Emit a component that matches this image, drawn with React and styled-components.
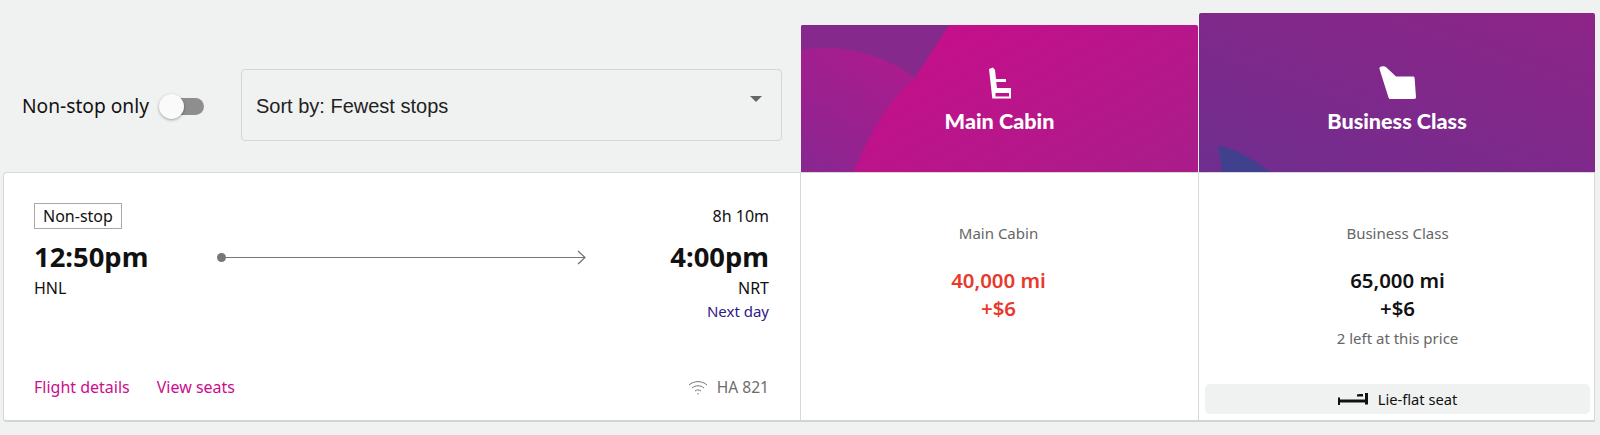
import styled, { createGlobalStyle } from "styled-components";

const GlobalStyle = createGlobalStyle`
  html, body {
    margin: 0;
    background: #f0f2f1;
  }
  body {
    font-family: "Noto Sans", "Open Sans", sans-serif;
    color: #111;
  }
`;

const Page = styled.div`
  width: 1600px;
  height: 435px;
  padding: 13px 5px 0 3px;
  box-sizing: border-box;
  display: grid;
  grid-template-columns: 797px 398px 397px;
  grid-template-rows: 159px 250px;
`;

const Toolbar = styled.div`
  display: flex;
  align-items: center;
  padding: 25px 18px 0 19px;
  box-sizing: border-box;
`;

const ToggleLabel = styled.span`
  font-size: 19.2px;
  line-height: 24px;
  white-space: nowrap;
  padding-top: 1px;
`;

const Toggle = styled.div`
  position: relative;
  width: 43px;
  height: 17px;
  margin: 3px 37px 0 12px;
  flex-shrink: 0;
  border-radius: 9px;
  background: #8e8e8e;
`;

const Thumb = styled.div`
  position: absolute;
  left: -2px;
  top: -4px;
  width: 25px;
  height: 25px;
  border-radius: 50%;
  background: #fafafa;
  box-shadow: 0 1px 3px rgba(0, 0, 0, 0.35);
`;

const Select = styled.div`
  flex: 1;
  height: 72px;
  display: flex;
  align-items: center;
  justify-content: space-between;
  padding: 2px 19px 0 14px;
  box-sizing: border-box;
  border: 1px solid #d4d6d5;
  border-radius: 4px;
  font-family: "Liberation Sans", Arial, sans-serif;
  font-size: 20px;
  color: #222;
`;

const Caret = styled.span`
  width: 0;
  height: 0;
  margin-bottom: 14px;
  border-left: 6px solid transparent;
  border-right: 6px solid transparent;
  border-top: 6px solid #666;
`;

const CabinHeader = styled.div`
  position: relative;
  overflow: hidden;
  align-self: end;
  height: ${(p) => p.$height}px;
  margin-left: 1px;
  border-radius: 2px 2px 0 0;
  background: ${(p) => p.$background};
  display: flex;
  flex-direction: column;
  align-items: center;
  justify-content: flex-end;
  padding-bottom: 38px;
  box-sizing: border-box;
  color: #fff;
`;

const HeaderArt = styled.svg`
  position: absolute;
  left: 0;
  bottom: 0;
`;

const CabinIcon = styled.svg`
  position: relative;
  display: block;
  margin-bottom: 9px;
  fill: #fff;
`;

const CabinTitle = styled.div`
  position: relative;
  font-family: Lato, "Noto Sans", sans-serif;
  font-weight: 900;
  font-size: 21.6px;
  line-height: 26px;
  white-space: nowrap;
`;

const FlightCell = styled.div`
  background: #fff;
  border: 1px solid #d6d8d7;
  border-right: none;
  border-bottom: 2px solid #d2d4d3;
  border-radius: 4px 0 0 4px;
  padding: 30px 31px 0 30px;
  box-sizing: border-box;
  display: flex;
  flex-direction: column;
`;

const SpreadRow = styled.div`
  display: flex;
  justify-content: space-between;
  align-items: center;
`;

const Badge = styled.span`
  border: 1px solid #a9a9a9;
  padding: 0 8px;
  font-size: 16px;
  line-height: 24px;
  height: 24px;
`;

const Duration = styled.span`
  font-size: 16px;
  line-height: 24px;
`;

const TimesRow = styled.div`
  display: grid;
  grid-template-columns: 183px 1fr 183px;
  align-items: center;
  margin-top: 9px;
`;

const Time = styled.div`
  font-size: 27.4px;
  line-height: 38px;
  font-weight: 700;
  text-align: ${(p) => p.$align || "left"};
`;

const Route = styled.div`
  display: flex;
  align-items: center;
  margin-top: 1px;
`;

const Dot = styled.span`
  width: 9px;
  height: 9px;
  border-radius: 50%;
  background: #777;
  flex-shrink: 0;
`;

const RouteLine = styled.span`
  flex: 1;
  height: 1.5px;
  background: #777;
`;

const Airport = styled.span`
  font-size: 16px;
  line-height: 24px;
`;

const NextDay = styled.div`
  font-size: 15px;
  line-height: 22px;
  text-align: right;
  color: #2d1a85;
`;

const FlightFooter = styled(SpreadRow)`
  margin-top: 54px;
`;

const Links = styled.div`
  display: flex;
  gap: 27px;
`;

const LinkText = styled.a`
  color: #cb0d8c;
  font-size: 16px;
  line-height: 22px;
  cursor: pointer;
`;

const FlightNumber = styled.div`
  display: flex;
  align-items: center;
  gap: 9px;
  color: #6d6d6d;
  font-size: 15.6px;
  line-height: 22px;
`;

const FareCell = styled.div`
  background: #fff;
  border: 1px solid #d6d8d7;
  border-right: ${(p) => (p.$last ? "1px solid #d6d8d7" : "none")};
  border-bottom: 2px solid #d2d4d3;
  display: flex;
  flex-direction: column;
  align-items: center;
  padding: 49px ${(p) => (p.$last ? 4 : 8)}px 6px 6px;
  box-sizing: border-box;
  text-align: center;
`;

const FareName = styled.div`
  font-size: 15px;
  line-height: 22px;
  color: #666;
`;

const Price = styled.div`
  margin-top: ${(p) => p.$gap || 0}px;
  font-size: 20.4px;
  line-height: 28px;
  font-weight: 600;
  color: ${(p) => (p.$sale ? "#e8392c" : "#111")};
`;

const Remaining = styled.div`
  margin-top: 5px;
  font-size: 15px;
  line-height: 22px;
  color: #666;
`;

const Perk = styled.div`
  margin-top: auto;
  width: 100%;
  height: 30px;
  display: flex;
  align-items: center;
  justify-content: center;
  gap: 10px;
  border-radius: 5px;
  background: #f0f2f1;
  font-size: 14.7px;
`;

const SmallIcon = styled.svg`
  display: block;
  flex-shrink: 0;
`;

const RouteArrow = styled(SmallIcon)`
  margin-left: -8px;
`;

const App = () => (
  <>
    <GlobalStyle />
    <Page>
      <Toolbar>
        <ToggleLabel>Non-stop only</ToggleLabel>
        <Toggle>
          <Thumb />
        </Toggle>
        <Select>
          Sort by: Fewest stops
          <Caret />
        </Select>
      </Toolbar>

      <CabinHeader
        $height={147}
        $background="linear-gradient(150deg, #c60f8a 20%, #a91d8b 100%)"
      >
        <HeaderArt width="397" height="147" viewBox="0 0 397 147">
          <defs>
            <linearGradient id="mainArc" x1="0.7" y1="0.1" x2="0.2" y2="1">
              <stop offset="0" stopColor="#a91c8e" />
              <stop offset="1" stopColor="#8b2690" />
            </linearGradient>
          </defs>
          <path d="M0 0H148L114 53C85 76 68 112 52 147H0Z" fill="#85298d" />
          <path
            d="M0 25C40 18 85 30 114 53C85 76 68 112 52 147H0Z"
            fill="url(#mainArc)"
          />
        </HeaderArt>
        <CabinIcon width="22" height="32" viewBox="0 0 22 32">
          <path
            fillRule="evenodd"
            d="M0 2 4 0.5 6 3 7 12H17V15H7.2L8 21H22V31.5H3.3ZM6.5 26V29.5H20V26Z"
          />
        </CabinIcon>
        <CabinTitle>Main Cabin</CabinTitle>
      </CabinHeader>

      <CabinHeader
        $height={159}
        $background="linear-gradient(200deg, #8e2488 0%, #6f2e8e 100%)"
      >
        <HeaderArt width="397" height="159" viewBox="0 0 397 159">
          <path d="M19 132C40 138 58 148 70 159H23Z" fill="#41408f" />
        </HeaderArt>
        <CabinIcon width="37" height="33" viewBox="0 0 37 33">
          <path d="M0.5 3C0 1 2 0 4.5 0.2 6 0.3 7 0.8 8 2L17 10.5H34C35 10.5 35.5 11 35.6 12L37 31C37 32.3 36.5 33 35 33H11.5C10.5 33 10 32.5 9.5 31.5Z" />
        </CabinIcon>
        <CabinTitle>Business Class</CabinTitle>
      </CabinHeader>

      <FlightCell>
        <SpreadRow>
          <Badge>Non-stop</Badge>
          <Duration>8h 10m</Duration>
        </SpreadRow>
        <TimesRow>
          <Time>12:50pm</Time>
          <Route>
            <Dot />
            <RouteLine />
            <RouteArrow width="9" height="15" viewBox="0 0 9 15">
              <path d="M1 1 8 7.5 1 14" fill="none" stroke="#777" strokeWidth="1.3" />
            </RouteArrow>
          </Route>
          <Time $align="right">4:00pm</Time>
        </TimesRow>
        <SpreadRow>
          <Airport>HNL</Airport>
          <Airport>NRT</Airport>
        </SpreadRow>
        <NextDay>Next day</NextDay>
        <FlightFooter>
          <Links>
            <LinkText>Flight details</LinkText>
            <LinkText>View seats</LinkText>
          </Links>
          <FlightNumber>
            <SmallIcon width="20" height="15" viewBox="0 0 20 15" fill="none" stroke="#777" strokeWidth="1">
              <path d="M1 5C6 0.5 14 0.5 19 5" />
              <path d="M4 8C7.5 5 12.5 5 16 8" />
              <path d="M7 11C8.8 9.6 11.2 9.6 13 11" />
              <circle cx="10" cy="13.8" r="0.7" fill="#777" stroke="none" />
            </SmallIcon>
            HA 821
          </FlightNumber>
        </FlightFooter>
      </FlightCell>

      <FareCell>
        <FareName>Main Cabin</FareName>
        <Price $sale $gap={22}>40,000 mi</Price>
        <Price $sale>+$6</Price>
      </FareCell>

      <FareCell $last>
        <FareName>Business Class</FareName>
        <Price $gap={22}>65,000 mi</Price>
        <Price>+$6</Price>
        <Remaining>2 left at this price</Remaining>
        <Perk>
          <SmallIcon width="30" height="12" viewBox="0 0 30 12" fill="#111">
            <path d="M0 4.5H2V12H0ZM2 6.5H27V9.5H2ZM27 0H30V11.5H27ZM19 1.5C20 0.8 23 0.8 25 1V3.5H19Z" />
          </SmallIcon>
          Lie-flat seat
        </Perk>
      </FareCell>
    </Page>
  </>
);

export default App;
